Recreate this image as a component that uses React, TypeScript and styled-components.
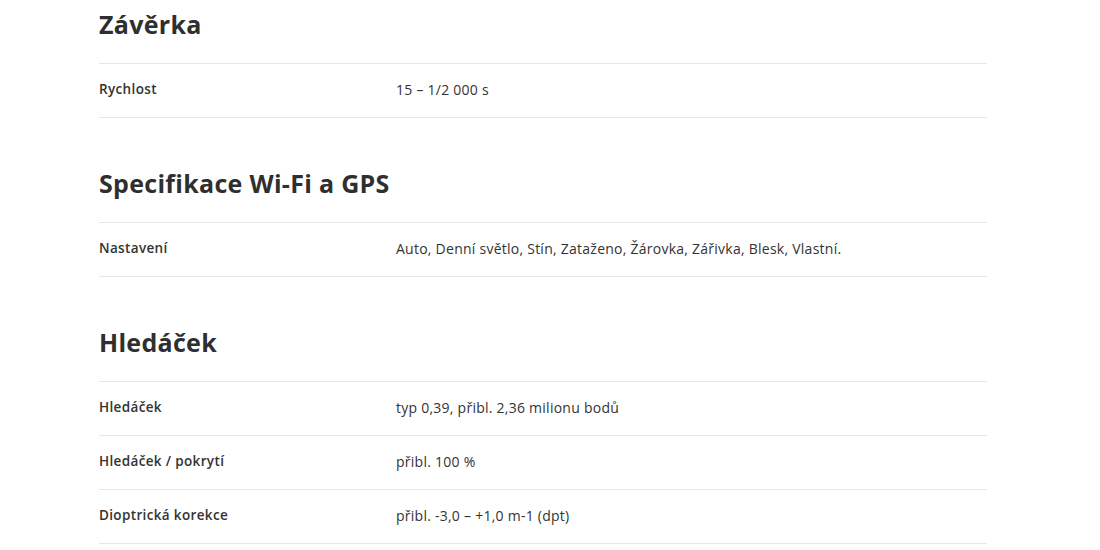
import React from 'react'
import styled, { createGlobalStyle } from 'styled-components';

interface SpecRow {
  label: string;
  value: string;
}

interface SpecSection {
  title: string;
  rows: SpecRow[];
}

const sections: SpecSection[] = [
  {
    title: "Závěrka",
    rows: [{ label: "Rychlost", value: "15 – 1/2 000 s" }],
  },
  {
    title: "Specifikace Wi-Fi a GPS",
    rows: [
      {
        label: "Nastavení",
        value: "Auto, Denní světlo, Stín, Zataženo, Žárovka, Zářivka, Blesk, Vlastní.",
      },
    ],
  },
  {
    title: "Hledáček",
    rows: [
      { label: "Hledáček", value: "typ 0,39, přibl. 2,36 milionu bodů" },
      { label: "Hledáček / pokrytí", value: "přibl. 100 %" },
      { label: "Dioptrická korekce", value: "přibl. -3,0 – +1,0 m-1 (dpt)" },
    ],
  },
];

export default function App() {
  return (
    <>
      <GlobalStyle />
      <Page>
        {sections.map((section) => (
          <Section key={section.title}>
            <Title>{section.title}</Title>
            <Table>
              {section.rows.map((row) => (
                <Row key={row.label}>
                  <Label>{row.label}</Label>
                  <Value>{row.value}</Value>
                </Row>
              ))}
            </Table>
          </Section>
        ))}
      </Page>
    </>
  )
}

const GlobalStyle = createGlobalStyle`
  body {
    margin: 0;
    background: #fff;
    font-family: "Open Sans", "Liberation Sans", sans-serif;
    color: #333;
  }
`;

const Page = styled.div`
  width: 888px;
  margin-left: 99px;
`;

const Section = styled.section`
  & + & {
    margin-top: 41px;
  }
`;

const Title = styled.h2`
  margin: 0 0 15px;
  height: 48px;
  line-height: 48px;
  font-size: 25px;
  font-weight: 700;
  letter-spacing: 0.3px;
  color: #2f2f2f;
`;

const Table = styled.div`
  border-bottom: 1px solid #e6e6e6;
`;

const Row = styled.div`
  display: grid;
  grid-template-columns: 297px 1fr;
  align-items: center;
  height: 54px;
  padding-bottom: 3px;
  box-sizing: border-box;
  border-top: 1px solid #e6e6e6;
`;

const Label = styled.div`
  font-size: 13.5px;
  font-weight: 600;
  letter-spacing: 0.35px;
  color: #333;
`;

const Value = styled.div`
  font-size: 14px;
  letter-spacing: 0.25px;
  color: #333;
`;
